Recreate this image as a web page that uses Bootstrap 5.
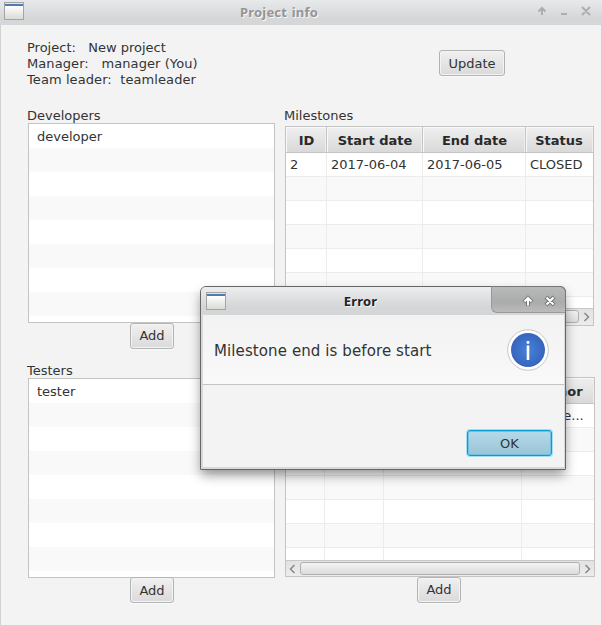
<!DOCTYPE html>
<html lang="en">
<head>
<meta charset="utf-8">
<meta name="viewport" content="width=device-width, initial-scale=1">
<title>Project info</title>
<link rel="stylesheet" href="https://cdn.jsdelivr.net/npm/bootstrap@5.3.0/dist/css/bootstrap.min.css">
<style>
body{font-family:"DejaVu Sans",sans-serif;font-size:13px;line-height:16px;color:#333;background:#f3f3f3;overflow:hidden}
.main-window{width:602px;height:626px}
.title-strip{height:25px;background:linear-gradient(#e8e9ea,#d5d6d7 75%,#d6d7d8);font:bold 13px/22px "Noto Sans","Open Sans",sans-serif;letter-spacing:.2px;word-spacing:1px}
.main-title{color:#949596;text-shadow:1px 1px 0 #f6f6f6;padding-right:68px;margin-top:-2px}
.win-icon{width:20px;height:18px;border:1px solid #a4a5a3;background:linear-gradient(#dfe5ec 0 1px,#4f7ab5 1px 3px,#fff 3px,#d9dbd5)}
.win-body{border:solid #d2d2d2;border-width:0 1px 1px;padding:15px 7px 0 26px}
.info-row{height:67px}
.info-text{white-space:pre}
.info-wide{letter-spacing:.085px}
.update-slot{margin-top:10px;margin-right:89px}
.fx-btn{--bs-btn-font-size:13px;--bs-btn-line-height:16px;--bs-btn-padding-x:8px;--bs-btn-padding-y:4px;--bs-btn-border-radius:3px;--bs-btn-color:#333;--bs-btn-border-color:#b3b3b3;background:linear-gradient(#f0f0f0,#dadada);box-shadow:inset 0 0 0 1px #f4f4f4,0 1px 0 #fafafa;height:26px}
.update-slot .fx-btn{width:66px;padding-top:5px;padding-bottom:3px}
.col-left{width:248px;margin-right:9px}
.col-left .fx-btn{margin-left:2px}
.left-block+.left-block .fx-btn{margin-top:-1px;padding-top:5px;padding-bottom:3px}
.col-right{width:310px}
.list-box{width:247px;height:200px;margin-left:1px;border:1px solid #c4c4c4;background:repeating-linear-gradient(#fff 0 24px,#f9f9f9 24px 48px)}
.list-box .entry{height:24px;line-height:24px;padding:1px 0 0 8px}
.left-block{height:255px}
.right-block{height:251px}
.list-label{height:16px;padding-top:1px}
.grid-label{height:19px;padding-top:1px}
.grid-box{margin-left:1px;height:200px;border:1px solid #c4c4c4;background:#fff}
.grid-box.wider{margin-right:-1px}
.wider .scroll-strip{height:16px;padding-top:1px}
.grid-rows{overflow:hidden;flex:1 1 0;min-height:0}
.data-grid{table-layout:fixed;border-collapse:separate;border-spacing:0;width:100%}
.data-grid th{height:26px;padding:2px 0 0 1px;text-align:center;vertical-align:middle;border:solid #c4c4c4;border-width:0 1px 1px 0;background:linear-gradient(#efefef,#d9d9d9);box-shadow:inset 1px 1px 0 #f9f9f9,inset -1px 0 0 #eee;color:#2a2a2a}
.data-grid td{height:24px;padding:0 0 0 4px;border:solid #ececec;border-width:0 1px 1px 0;white-space:nowrap;overflow:hidden}
.data-grid tr>:last-child{border-right:0}
.data-grid th:last-child{padding-left:0;padding-right:1px}
.data-grid tbody tr:nth-child(even) td{background:#f9f9f9}
.scroll-strip{height:17px;border-top:1px solid #c8c8c8;background:linear-gradient(#e2e2e2,#ececec);padding:1px 0 0}
.thumb{height:13px;border:1px solid #b0b0b0;border-radius:3px;background:linear-gradient(#f3f3f3,#dcdcdc)}
.arrow{width:14px;height:13px}
.error-dialog{left:200px;top:286px;width:366px;height:184px;border:1px solid #666;border-radius:6px 6px 1px 1px;background:#d7d8d9;box-shadow:0 6px 12px -1px rgba(0,0,0,.42)}
.error-dialog .title-strip{height:28px;border-radius:5px 5px 0 0;line-height:28px;color:#222;text-shadow:1px 1px 0 #f6f6f6;background:linear-gradient(#ecedee,#d5d6d7 70%)}
.error-dialog .win-icon{margin-left:5px}
.error-title{padding-right:70px}
.win-controls{width:75px;height:27px;right:-1px;top:-1px;border:solid #777;border-left-color:#999;border-bottom-color:#999;border-width:1px;border-radius:0 6px 0 6px;background:linear-gradient(#b8b9b9,#aaabab 60%,#bbb)}
.dialog-inner{margin:0 1px 0 2px;height:152px;background:#f3f3f3}
.dialog-head{height:70px;border-bottom:1px solid #c3c3c3;background:linear-gradient(#f2f2f2,#f9f9f9);font-size:15px;letter-spacing:.1px;padding:2px 15px 0 11px}
.dialog-head svg{margin-top:-2px}
.ok-btn{--bs-btn-font-size:13px;--bs-btn-line-height:16px;--bs-btn-border-radius:3px;--bs-btn-color:#333;padding:5px 0 3px;width:85px;height:26px;border:1px solid #039ed3;background:linear-gradient(#b4daea,#9bc3d7);box-shadow:inset 0 0 0 1px #6fc3e2,0 0 0 1px #a9dcef;margin:45px 12px 0 0}
</style>
</head>
<body>
<div class="main-window position-relative d-flex flex-column">
  <header class="title-strip position-relative d-flex align-items-center flex-shrink-0">
    <span class="win-icon ms-1 mb-1"></span>
    <span class="main-title flex-grow-1 text-center">Project info</span>
    <svg width="67" height="24" viewBox="535 0 67 24" class="position-absolute end-0 top-0" fill="none" stroke="#adaeaf" stroke-width="2"><path d="M542 15V9M538.5 11.5 542 8l3.500 3.500M561 14h6M582 7l8 8M590 7l-8 8"/></svg>
  </header>
  <main class="win-body flex-grow-1">
    <div class="info-row d-flex justify-content-between">
      <div class="info-text"><div>Project:   New project</div><div class="info-wide">Manager:   manager (You)</div><div class="info-wide">Team leader:  teamleader</div></div>
      <div class="update-slot"><button class="btn fx-btn">Update</button></div>
    </div>
    <div class="d-flex">
      <div class="col-left">
        <section class="left-block d-flex flex-column">
          <div class="list-label">Developers</div>
          <div class="list-box"><div class="entry">developer</div></div>
          <button class="btn fx-btn align-self-center">Add</button>
        </section>
        <section class="left-block d-flex flex-column">
          <div class="list-label">Testers</div>
          <div class="list-box"><div class="entry">tester</div></div>
          <button class="btn fx-btn align-self-center">Add</button>
        </section>
      </div>
      <div class="col-right">
        <section class="right-block">
          <div class="grid-label">Milestones</div>
          <div class="grid-box d-flex flex-column">
            <div class="grid-rows">
              <table class="data-grid">
                <colgroup><col style="width:41px"><col style="width:96px"><col style="width:103px"><col></colgroup>
                <thead><tr><th>ID</th><th>Start date</th><th>End date</th><th>Status</th></tr></thead>
                <tbody>
                  <tr><td>2</td><td>2017-06-04</td><td>2017-06-05</td><td>CLOSED</td></tr>
                  <tr><td></td><td></td><td></td><td></td></tr><tr><td></td><td></td><td></td><td></td></tr>
                  <tr><td></td><td></td><td></td><td></td></tr><tr><td></td><td></td><td></td><td></td></tr>
                  <tr><td></td><td></td><td></td><td></td></tr><tr><td></td><td></td><td></td><td></td></tr>
                </tbody>
              </table>
            </div>
            <div class="scroll-strip d-flex">
              <svg class="arrow" viewBox="0 0 14 13" fill="none" stroke="#888" stroke-width="1.500"><path d="M8.500 3 4.500 7l4 4"/></svg>
              <span class="thumb flex-grow-1"></span>
              <svg class="arrow" viewBox="0 0 14 13" fill="none" stroke="#888" stroke-width="1.500"><path d="m5.500 3 4 4-4 4"/></svg>
            </div>
          </div>
        </section>
        <section class="d-flex flex-column">
          <div class="grid-label"></div>
          <div class="grid-box wider d-flex flex-column">
            <div class="grid-rows">
              <table class="data-grid">
                <colgroup><col style="width:39px"><col style="width:59px"><col style="width:138px"><col></colgroup>
                <thead><tr><th></th><th></th><th></th><th>Author</th></tr></thead>
                <tbody>
                  <tr><td></td><td></td><td></td><td>teamle...</td></tr>
                  <tr><td></td><td></td><td></td><td></td></tr><tr><td></td><td></td><td></td><td></td></tr>
                  <tr><td></td><td></td><td></td><td></td></tr><tr><td></td><td></td><td></td><td></td></tr>
                  <tr><td></td><td></td><td></td><td></td></tr><tr><td></td><td></td><td></td><td></td></tr>
                </tbody>
              </table>
            </div>
            <div class="scroll-strip d-flex">
              <svg class="arrow" viewBox="0 0 14 13" fill="none" stroke="#888" stroke-width="1.500"><path d="M8.500 3 4.500 7l4 4"/></svg>
              <span class="thumb flex-grow-1"></span>
              <svg class="arrow" viewBox="0 0 14 13" fill="none" stroke="#888" stroke-width="1.500"><path d="m5.500 3 4 4-4 4"/></svg>
            </div>
          </div>
          <button class="btn fx-btn align-self-center">Add</button>
        </section>
      </div>
    </div>
  </main>

  <div class="error-dialog position-absolute" role="dialog" aria-label="Error">
    <div class="title-strip position-relative d-flex align-items-center">
      <span class="win-icon"></span>
      <span class="error-title flex-grow-1 text-center">Error</span>
      <span class="win-controls position-absolute">
        <svg class="d-block" width="73" height="25" viewBox="492 287 73 25" fill="none"><g stroke="#777" stroke-width="4"><path d="M528 306v-7M524 302l4-4 4 4M546 297l8 8M554 297l-8 8"/></g><g stroke="#fff" stroke-width="2"><path d="M528 305.500V299M524.500 301.500l3.500-3.500 3.500 3.500M546.500 297.500l7 7M553.500 297.500l-7 7"/></g></svg>
      </span>
    </div>
    <div class="dialog-inner">
      <div class="dialog-head d-flex align-items-center justify-content-between">
        <span>Milestone end is before start</span>
        <svg width="42" height="42" viewBox="0 0 42 42"><defs><radialGradient id="blue"><stop offset="0" stop-color="#4583d8"/><stop offset="1" stop-color="#3864bd"/></radialGradient></defs><circle cx="21" cy="21" r="20.300" fill="#fff" stroke="#c8c8c8"/><circle cx="21" cy="21" r="17" fill="url(#blue)"/><path d="M21 12v2.800M21 16.500V31" stroke="#fff" stroke-width="2.600"/></svg>
      </div>
      <div class="d-flex justify-content-end"><button class="btn ok-btn">OK</button></div>
    </div>
  </div>
</div>
<script src="https://cdn.jsdelivr.net/npm/bootstrap@5.3.0/dist/js/bootstrap.bundle.min.js"></script>
</body>
</html>
